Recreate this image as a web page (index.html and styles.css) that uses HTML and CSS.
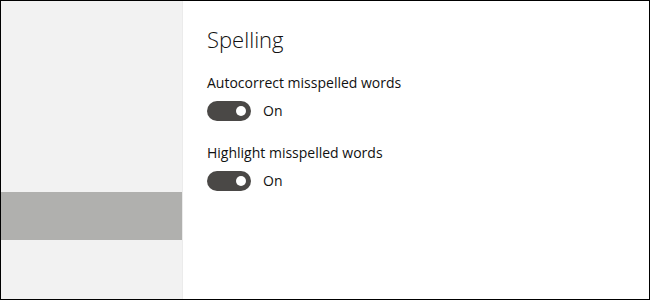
FILE: index.html
```html
<!DOCTYPE html>
<html lang="en">

<head>
    <meta charset="UTF-8">
    <meta name="viewport" content="width=device-width, initial-scale=1.0">
    <title>Spelling</title>
    <link rel="stylesheet" href="styles.css">
</head>

<body>
    <div class="window">
        <div class="sidebar">
            <div class="nav-selected"></div>
        </div>

        <div class="content">
            <h1>Spelling</h1>

            <div class="setting">
                <div class="setting-label">Autocorrect misspelled words</div>
                <div class="toggle-row">
                    <span class="toggle on"><span class="knob"></span></span>
                    <span class="toggle-text">On</span>
                </div>
            </div>

            <div class="setting">
                <div class="setting-label">Highlight misspelled words</div>
                <div class="toggle-row">
                    <span class="toggle on"><span class="knob"></span></span>
                    <span class="toggle-text">On</span>
                </div>
            </div>
        </div>
    </div>
</body>

</html>
```

FILE: styles.css
```css
html,
body {
    margin: 0;
    padding: 0;
}

body {
    font-family: "Open Sans", "Noto Sans", sans-serif;
    color: #111;
    background: #fff;
}

.window {
    width: 650px;
    height: 300px;
    box-sizing: border-box;
    border: 1px solid #000;
    display: flex;
}

.sidebar {
    width: 181px;
    background-color: #f2f2f2;
    border-right: 1px solid #ebebeb;
    padding-top: 191px;
}

.nav-selected {
    height: 48px;
    background-color: #b0b0ae;
}

.content {
    flex: 1;
    padding: 24px 24px 0 24px;
}

h1 {
    font-size: 22px;
    font-weight: 300;
    line-height: 28px;
    margin: 0 0 20px 0;
}

.setting {
    margin-bottom: 22px;
}

.setting-label {
    font-size: 14px;
    line-height: 20px;
    margin-bottom: 8px;
}

.toggle-row {
    display: flex;
    align-items: center;
    height: 20px;
}

.toggle {
    width: 44px;
    height: 20px;
    border-radius: 10px;
    background-color: #4a4846;
    position: relative;
    margin-right: 12px;
}

.knob {
    position: absolute;
    top: 5px;
    right: 5px;
    width: 10px;
    height: 10px;
    border-radius: 50%;
    background-color: #fff;
}

.toggle-text {
    font-size: 14px;
    line-height: 20px;
}
```
